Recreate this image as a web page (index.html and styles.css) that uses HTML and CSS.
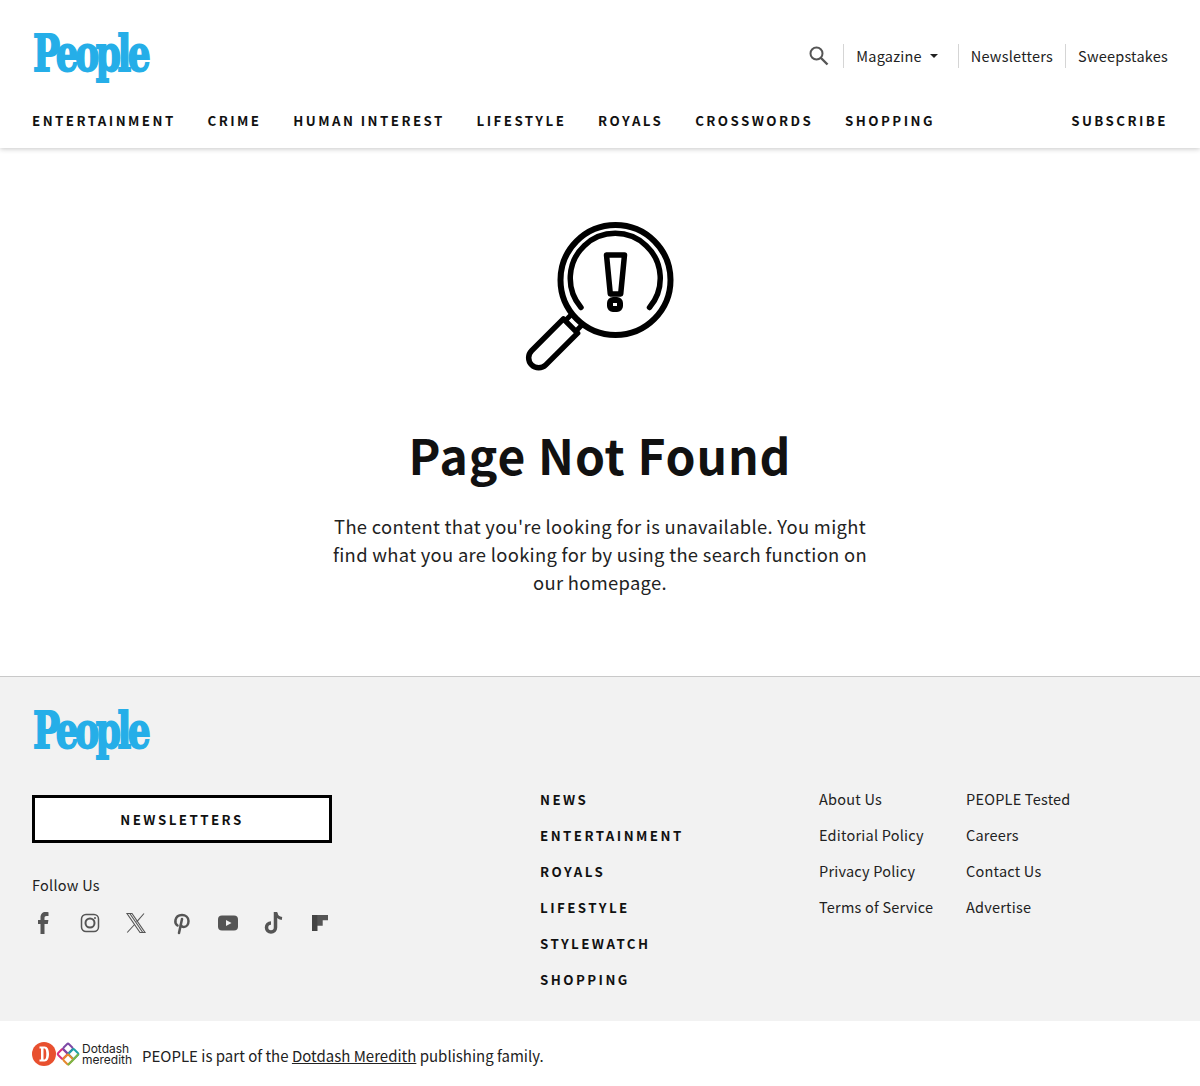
FILE: index.html
```html
<!DOCTYPE html>
<html lang="en">
<head>
<meta charset="utf-8">
<title>Page Not Found</title>
<link rel="stylesheet" href="styles.css">
</head>
<body>
<header class="site-header">
  <div class="top-row">
    <a class="logo" href="#" aria-label="People">
      <svg width="130" height="54" viewBox="0 0 130 54"><text transform="scale(.68 .96)" x="1.500" y="40.600" textLength="173" lengthAdjust="spacing" class="logo-text">People</text></svg>
    </a>
    <div class="utility">
      <svg class="search-icon" width="24" height="24" viewBox="0 0 24 24"><circle cx="9.500" cy="9.500" r="6" fill="none" stroke="#555" stroke-width="2"/><path d="M14 14l6.500 6.500" stroke="#555" stroke-width="2.400" fill="none"/></svg>
      <a class="util-link magazine" href="#">Magazine<span class="caret"></span></a>
      <a class="util-link news" href="#">Newsletters</a>
      <a class="util-link sweeps" href="#">Sweepstakes</a>
    </div>
  </div>
  <nav class="main-nav">
    <div class="nav-items">
      <a href="#">ENTERTAINMENT</a>
      <a href="#">CRIME</a>
      <a href="#">HUMAN INTEREST</a>
      <a href="#">LIFESTYLE</a>
      <a href="#">ROYALS</a>
      <a href="#">CROSSWORDS</a>
      <a href="#">SHOPPING</a>
    </div>
    <a href="#">SUBSCRIBE</a>
  </nav>
</header>

<main class="not-found">
  <svg class="nf-icon" width="180" height="170" viewBox="0 0 180 170" fill="none" stroke="#000" stroke-width="6" stroke-linecap="round" stroke-linejoin="round">
    <circle cx="106.500" cy="70" r="55"/>
    <path d="M72 97.500A45 45 0 1 1 140.500 97.500" stroke-width="5.500"/>
    <path d="M97.500 45h18l-3.800 39h-10.400z" stroke-width="5.500"/>
    <rect x="101" y="90" width="10" height="9" rx="3" stroke-width="6"/>
    <path d="M54.400 108.900L22.600 140.700A10 10 0 0 0 36.800 154.900L68.600 123.100Z" stroke-width="5.500"/>
    <path d="M56.200 110.700L61.900 105M66.800 121.300L72.500 115.600" stroke-linecap="butt" stroke-width="5"/>
  </svg>
  <h1>Page Not Found</h1>
  <p>The content that you're looking for is unavailable. You might find what you are looking for by using the search function on our homepage.</p>
</main>

<footer class="site-footer">
  <div class="footer-main">
    <a class="logo footer-logo" href="#" aria-label="People">
      <svg width="130" height="54" viewBox="0 0 130 54"><text transform="scale(.68 .96)" x="1.500" y="40.600" textLength="173" lengthAdjust="spacing" class="logo-text">People</text></svg>
    </a>
    <div class="footer-grid">
      <div class="footer-left">
        <a class="btn-news" href="#">NEWSLETTERS</a>
        <div class="follow">Follow Us</div>
        <div class="socials">
          <svg width="24" height="24" viewBox="0 0 24 24" fill="#555"><path d="M8.500 23V13H6V9h2.500V6.500C8.500 3 10.500 1 13.500 1c1.500 0 2.700.1 3 .2v3.900h-2c-1.500 0-2 .8-2 1.900V9h3.900l-.6 4h-3.300v10z"/></svg>
          <svg width="24" height="24" viewBox="0 0 24 24" fill="none" stroke="#555" stroke-width="1.500"><rect x="3.500" y="3.500" width="17" height="17" rx="4.500"/><circle cx="12" cy="12" r="4.500" stroke-width="2"/><circle cx="17" cy="7" r="1" fill="#555" stroke="none"/></svg>
          <svg width="24" height="24" viewBox="0 0 24 24" fill="none" stroke="#555" stroke-width="1.100"><path d="M3 2.500h5l13 19h-5z"/><path d="M5.800 2.500l13 19" /><path d="M20 2.500l-7.300 8.400M10.600 13.500L3.200 21.500"/></svg>
          <svg width="24" height="24" viewBox="0 0 24 24" fill="none" stroke="#555" stroke-width="2.500" stroke-linecap="round"><path d="M7.500 14.500C6 13.500 5 11.500 5.500 9c.6-3 3.300-5 6.500-5 3.500 0 6.500 2.300 6.500 6 0 3.500-2 6-4.700 6-1.500 0-2.500-1-2.800-1.800"/><path d="M12 8l-3 14"/></svg>
          <svg width="24" height="24" viewBox="0 0 24 24"><rect x="2" y="4.500" width="20" height="15" rx="4" fill="#555"/><path d="M10 9l5.500 3-5.500 3z" fill="#f2f2f2"/></svg>
          <svg width="24" height="24" viewBox="0 0 24 24" fill="none" stroke="#555" stroke-width="3.500"><path d="M13.500 1V16.500a4.500 4.500 0 1 1-4.500-4.500"/><path d="M14 2c.5 3 2.500 5 6 5.500" stroke-width="3"/></svg>
          <svg width="24" height="24" viewBox="0 0 24 24"><path d="M4 4h16v5.300h-5.300v5.400H9.300V20H4z" fill="#555"/><path d="M4 4h5.300v16H4z" fill="#444"/></svg>
        </div>
      </div>
      <div class="footer-cats">
        <a href="#">NEWS</a>
        <a href="#">ENTERTAINMENT</a>
        <a href="#">ROYALS</a>
        <a href="#">LIFESTYLE</a>
        <a href="#">STYLEWATCH</a>
        <a href="#">SHOPPING</a>
      </div>
      <div class="footer-links col-a">
        <a href="#">About Us</a>
        <a href="#">Editorial Policy</a>
        <a href="#">Privacy Policy</a>
        <a href="#">Terms of Service</a>
      </div>
      <div class="footer-links">
        <a href="#">PEOPLE Tested</a>
        <a href="#">Careers</a>
        <a href="#">Contact Us</a>
        <a href="#">Advertise</a>
      </div>
    </div>
  </div>
  <div class="family">
    <svg class="dm-mark" width="48" height="26" viewBox="0 0 48 26">
      <circle cx="12" cy="13" r="12" fill="#e8502f"/>
      <path d="M7.500 5.500h5c3 0 4.500 3 4.500 7.500s-1.500 7.500-4.500 7.500h-5v-2h1.500V7.500H7.500zM11.500 7.500v11h1c1.300 0 1.800-2.500 1.800-5.500s-.5-5.500-1.800-5.500z" fill="#fff"/>
      <g fill="none" stroke-width="2">
        <rect x="26.700" y="9.200" width="7.600" height="7.600" rx="1.500" transform="rotate(45 30.500 13)" stroke="#d6307f"/>
        <rect x="32.200" y="3.700" width="7.600" height="7.600" rx="1.500" transform="rotate(45 36 7.500)" stroke="#7d4aa6"/>
        <rect x="37.700" y="9.200" width="7.600" height="7.600" rx="1.500" transform="rotate(45 41.500 13)" stroke="#1fa3a8"/>
        <rect x="32.200" y="14.700" width="7.600" height="7.600" rx="1.500" transform="rotate(45 36 18.500)" stroke="#e8892f"/>
        <path d="M36 24l5.500-5.500 5-5.500" stroke="#7ab648"/>
      </g>
    </svg>
    <span class="dm-word">Dotdash<br>meredith</span>
    <span class="family-text">PEOPLE is part of the <a href="#">Dotdash Meredith</a> publishing family.</span>
  </div>
</footer>
</body>
</html>
```
FILE: styles.css
```css
* { box-sizing: border-box; }
html, body { margin: 0; padding: 0; }
body {
  font-family: "Noto Sans CJK JP", "Source Sans Pro", "Noto Sans", sans-serif;
  color: #111;
  background: #fff;
  width: 1200px;
}
a { color: inherit; text-decoration: none; }

.logo { display: block; width: 130px; height: 50px; }
.logo svg { display: block; overflow: visible; }
.logo-text {
  font-family: "DejaVu Serif", serif;
  font-weight: 700;
  font-size: 53px;
  fill: #25aee8;
  stroke: #25aee8;
  stroke-width: 2px;
}

.site-header {
  height: 148px;
  padding: 32px 32px 0;
  box-shadow: 0 1px 5px rgba(0,0,0,.22);
  position: relative;
}
.top-row {
  display: flex;
  justify-content: space-between;
  align-items: flex-start;
  height: 73px;
}
.utility {
  display: flex;
  align-items: center;
  height: 24px;
  margin-top: 12px;
  font-size: 14.500px;
  line-height: 24px;
  letter-spacing: .22px;
  color: #222;
}
.search-icon { margin-right: 12px; }
.util-link {
  display: flex;
  align-items: center;
  height: 24px;
  padding: 0 12px;
  border-left: 1px solid #d5d5d5;
}
.util-link.sweeps { padding-right: 0; }
.magazine { padding-right: 20px; }
.caret {
  display: block;
  margin-left: 8px;
  border-left: 4.500px solid transparent;
  border-right: 4.500px solid transparent;
  border-top: 4.500px solid #222;
}
.main-nav {
  display: flex;
  justify-content: space-between;
  font-size: 13.300px;
  font-weight: 700;
  letter-spacing: 2.450px;
  line-height: 32px;
  color: #111;
}
.nav-items { display: flex; gap: 31.800px; }

.not-found {
  height: 528px;
  display: flex;
  flex-direction: column;
  align-items: center;
  padding-top: 61px;
}
.nf-icon { display: block; margin-left: -2px; margin-top: 1px; }
.not-found h1 {
  margin: 43px 0 0;
  font-size: 48px;
  line-height: 62px;
  font-weight: 700;
  letter-spacing: .9px;
  color: #111;
}
.not-found p {
  margin: 27px 0 0;
  width: 540px;
  text-align: center;
  font-size: 18.400px;
  line-height: 28px;
  letter-spacing: .3px;
  color: #222;
}

.footer-main {
  background: #f2f2f2;
  border-top: 1px solid #c9c9c9;
  height: 345px;
  padding: 32px 32px 0;
}
.footer-grid {
  display: grid;
  grid-template-columns: 508px 279px 147px 1fr;
  margin-top: 36px;
}
.btn-news {
  display: block;
  width: 300px;
  height: 48px;
  border: 3px solid #000;
  background: #fff;
  text-align: center;
  font-size: 13.300px;
  font-weight: 700;
  letter-spacing: 2.450px;
  line-height: 44px;
  color: #111;
}
.follow {
  margin-top: 30px;
  font-size: 14.500px;
  line-height: 24px;
  letter-spacing: .25px;
  color: #222;
}
.socials {
  display: flex;
  gap: 22px;
  margin-top: 14px;
}
.socials svg { display: block; }
.footer-cats {
  display: flex;
  flex-direction: column;
  font-size: 13.300px;
  font-weight: 700;
  letter-spacing: 2.450px;
  line-height: 36px;
  margin-top: -13px;
}
.footer-links {
  display: flex;
  flex-direction: column;
  font-size: 14.500px;
  letter-spacing: .22px;
  line-height: 36px;
  color: #222;
  margin-top: -14px;
}

.family {
  display: flex;
  align-items: center;
  height: 65px;
  padding: 0 32px;
  background: #fff;
}
.dm-mark { display: block; flex: none; margin-right: 2px; }
.dm-word {
  font-family: "Inter", "Noto Sans", sans-serif;
  font-size: 12px;
  line-height: 11px;
  color: #222;
  width: 60px;
}
.family-text {
  font-size: 15px;
  line-height: 24px;
  color: #222;
  position: relative;
  top: 2px;
}
.family-text a { text-decoration: underline; }
```
